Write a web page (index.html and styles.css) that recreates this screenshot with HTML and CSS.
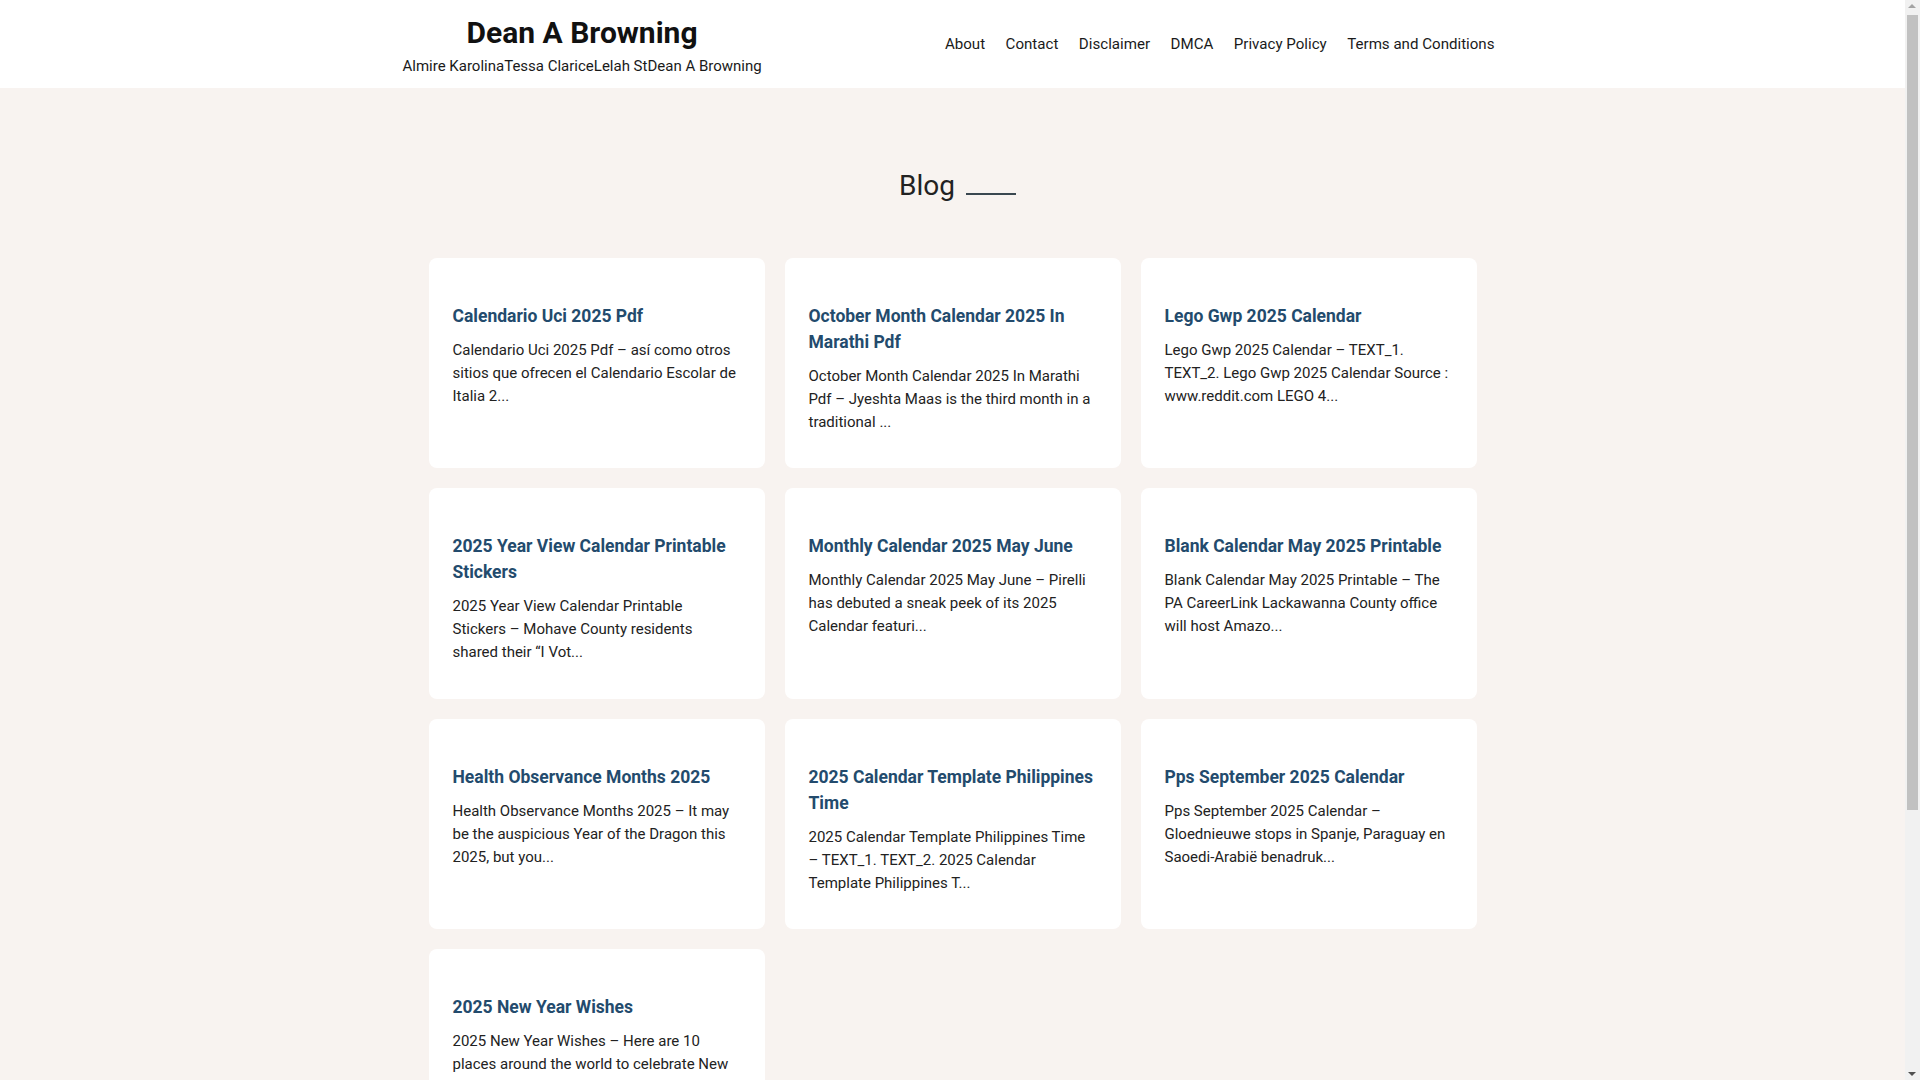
FILE: index.html
```html
<!DOCTYPE html>
<html lang="en">
<head>
<meta charset="utf-8">
<title>Blog – Dean A Browning</title>
<link rel="stylesheet" href="styles.css">
</head>
<body>
<header class="site-header">
  <div class="header-inner">
    <div class="branding">
      <p class="site-title"><a href="#">Dean A Browning</a></p>
      <p class="site-desc">Almire KarolinaTessa ClariceLelah StDean A Browning</p>
    </div>
    <nav class="main-nav">
      <a href="#">About</a>
      <a href="#">Contact</a>
      <a href="#">Disclaimer</a>
      <a href="#">DMCA</a>
      <a href="#">Privacy Policy</a>
      <a href="#">Terms and Conditions</a>
    </nav>
  </div>
</header>
<main class="content">
  <h1 class="page-title">Blog</h1>
  <div class="post-grid">
    <article class="card">
      <h2 class="card-title"><a href="#">Calendario Uci 2025 Pdf</a></h2>
      <p class="card-excerpt">Calendario Uci 2025 Pdf – así como otros sitios que ofrecen el Calendario Escolar de Italia 2...</p>
    </article>
    <article class="card">
      <h2 class="card-title"><a href="#">October Month Calendar 2025 In Marathi Pdf</a></h2>
      <p class="card-excerpt">October Month Calendar 2025 In Marathi Pdf – Jyeshta Maas is the third month in a traditional ...</p>
    </article>
    <article class="card">
      <h2 class="card-title"><a href="#">Lego Gwp 2025 Calendar</a></h2>
      <p class="card-excerpt">Lego Gwp 2025 Calendar – TEXT_1. TEXT_2. Lego Gwp 2025 Calendar Source : www.reddit.com LEGO 4...</p>
    </article>
    <article class="card">
      <h2 class="card-title"><a href="#">2025 Year View Calendar Printable Stickers</a></h2>
      <p class="card-excerpt">2025 Year View Calendar Printable Stickers – Mohave County residents shared their “I Vot...</p>
    </article>
    <article class="card">
      <h2 class="card-title"><a href="#">Monthly Calendar 2025 May June</a></h2>
      <p class="card-excerpt">Monthly Calendar 2025 May June – Pirelli has debuted a sneak peek of its 2025 Calendar featuri...</p>
    </article>
    <article class="card">
      <h2 class="card-title"><a href="#">Blank Calendar May 2025 Printable</a></h2>
      <p class="card-excerpt">Blank Calendar May 2025 Printable – The PA CareerLink Lackawanna County office will host Amazo...</p>
    </article>
    <article class="card">
      <h2 class="card-title"><a href="#">Health Observance Months 2025</a></h2>
      <p class="card-excerpt">Health Observance Months 2025 – It may be the auspicious Year of the Dragon this 2025, but you...</p>
    </article>
    <article class="card">
      <h2 class="card-title"><a href="#">2025 Calendar Template Philippines Time</a></h2>
      <p class="card-excerpt">2025 Calendar Template Philippines Time – TEXT_1. TEXT_2. 2025 Calendar Template Philippines T...</p>
    </article>
    <article class="card">
      <h2 class="card-title"><a href="#">Pps September 2025 Calendar</a></h2>
      <p class="card-excerpt">Pps September 2025 Calendar – Gloednieuwe stops in Spanje, Paraguay en Saoedi-Arabië benadruk...</p>
    </article>
    <article class="card">
      <h2 class="card-title"><a href="#">2025 New Year Wishes</a></h2>
      <p class="card-excerpt">2025 New Year Wishes – Here are 10 places around the world to celebrate New Year 2025 – Here's...</p>
    </article>
  </div>
</main>
<div class="scrollbar" aria-hidden="true">
  <span class="sb-arrow sb-up"></span>
  <span class="sb-thumb"></span>
  <span class="sb-arrow sb-down"></span>
</div>
</body>
</html>
```

FILE: styles.css
```css
* { box-sizing: border-box; }

html, body {
  margin: 0;
  padding: 0;
}

html {
  scrollbar-width: none;
}

body {
  font-family: Roboto, "Liberation Sans", Arial, sans-serif;
  color: #222222;
  background: #f8f3f0;
  padding-right: 15px;
}

a {
  color: inherit;
  text-decoration: none;
}

.site-header {
  background: #ffffff;
  height: 88px;
}

.header-inner {
  width: 1100px;
  margin: 0 auto;
  height: 88px;
  display: flex;
  align-items: center;
  justify-content: space-between;
}

.branding {
  text-align: center;
  padding-top: 4px;
}

.site-title {
  margin: 0;
  font-size: 30px;
  line-height: 36px;
  font-weight: 700;
  color: #111111;
}

.site-desc {
  margin: 4px 0 0;
  font-size: 15px;
  line-height: 22px;
  color: #1a1a1a;
}

.main-nav {
  display: flex;
  gap: 20.5px;
  padding-right: 8px;
  font-size: 15.1px;
  line-height: 24px;
  color: #1a1a1a;
}

.content {
  padding: 81px 0 260px;
}

.page-title {
  margin: 0 0 55px;
  text-align: center;
  font-size: 28px;
  line-height: 33.6px;
  font-weight: 400;
  color: #222222;
  padding-left: 10px;
}

.page-title::after {
  content: "";
  display: inline-block;
  width: 50px;
  height: 2px;
  margin-left: 11px;
  background: #3a4750;
  vertical-align: baseline;
}

.post-grid {
  width: 1048px;
  margin: 0 auto;
  display: grid;
  grid-template-columns: repeat(3, 336px);
  gap: 20px;
}

.card {
  background: #ffffff;
  border-radius: 8px;
  padding: 45px 26.5px 34.5px 24px;
}

.card-title {
  margin: 0;
  font-size: 17.5px;
  line-height: 26px;
  font-weight: 700;
  color: #234b6d;
}

.card-excerpt {
  margin: 10px 0 0;
  font-size: 15px;
  line-height: 23px;
  color: #222222;
}

/* drawn scrollbar overlaying the right edge, as in the reference */
.scrollbar {
  position: fixed;
  top: 0;
  right: 0;
  width: 15px;
  height: 100vh;
  background: #f1f1f1;
}

.sb-thumb {
  position: absolute;
  top: 15px;
  left: 2px;
  width: 11px;
  height: 795px;
  background: #c1c1c1;
}

.sb-arrow {
  position: absolute;
  left: 3px;
  width: 0;
  height: 0;
  border-left: 4.5px solid transparent;
  border-right: 4.5px solid transparent;
}

.sb-up {
  top: 4px;
  border-bottom: 4px solid #a3a3a3;
}

.sb-down {
  bottom: 4px;
  border-top: 4px solid #505050;
}
```
